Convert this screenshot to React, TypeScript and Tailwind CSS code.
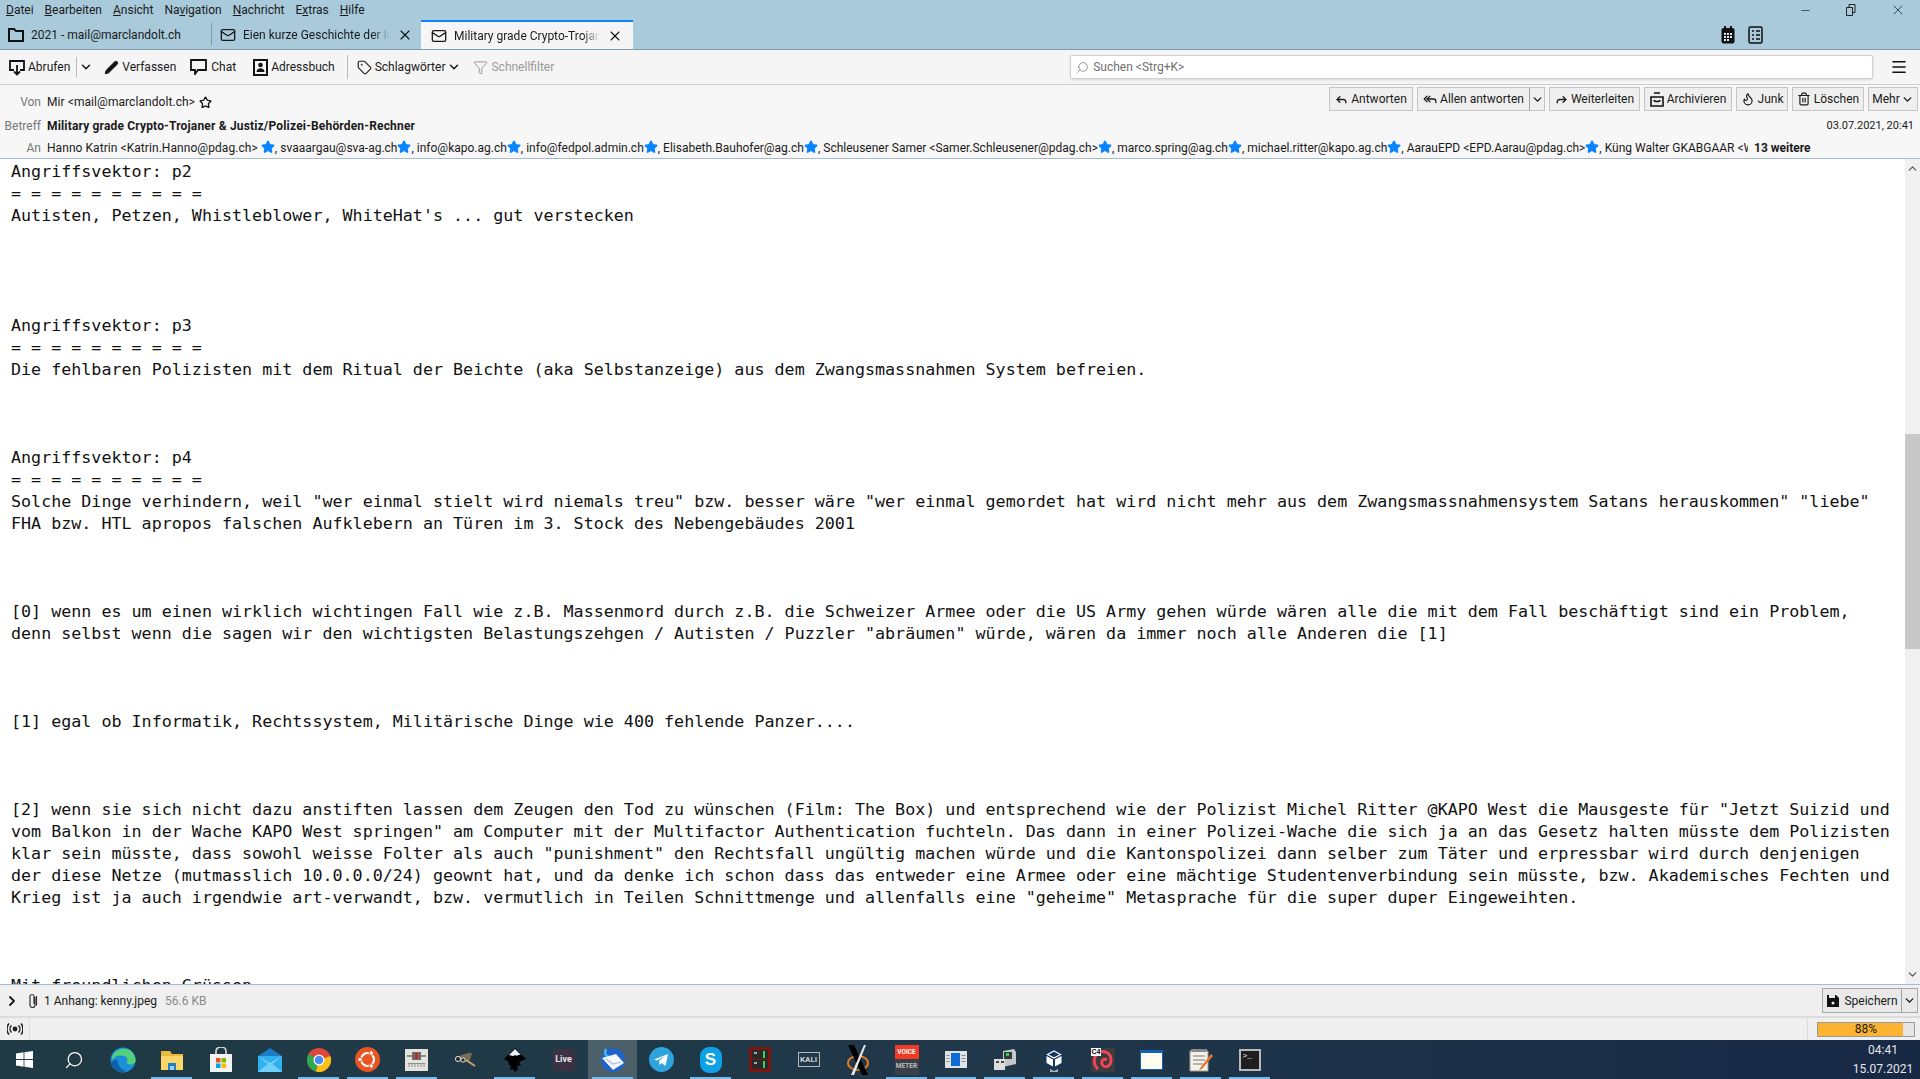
import { ChevronDown, ChevronRight, ChevronUp, Filter, Menu, Pencil, Reply, ReplyAll, Forward, Search, Star, Tag, Trash2, Flame, X, Mail, Minus } from 'lucide-react';
import type { ReactNode } from 'react';

const body = `Angriffsvektor: p2
= = = = = = = = = =
Autisten, Petzen, Whistleblower, WhiteHat's ... gut verstecken




Angriffsvektor: p3
= = = = = = = = = =
Die fehlbaren Polizisten mit dem Ritual der Beichte (aka Selbstanzeige) aus dem Zwangsmassnahmen System befreien.



Angriffsvektor: p4
= = = = = = = = = =
Solche Dinge verhindern, weil "wer einmal stielt wird niemals treu" bzw. besser wäre "wer einmal gemordet hat wird nicht mehr aus dem Zwangsmassnahmensystem Satans herauskommen" "liebe"
FHA bzw. HTL apropos falschen Aufklebern an Türen im 3. Stock des Nebengebäudes 2001



[0] wenn es um einen wirklich wichtingen Fall wie z.B. Massenmord durch z.B. die Schweizer Armee oder die US Army gehen würde wären alle die mit dem Fall beschäftigt sind ein Problem,
denn selbst wenn die sagen wir den wichtigsten Belastungszehgen / Autisten / Puzzler "abräumen" würde, wären da immer noch alle Anderen die [1]



[1] egal ob Informatik, Rechtssystem, Militärische Dinge wie 400 fehlende Panzer....



[2] wenn sie sich nicht dazu anstiften lassen dem Zeugen den Tod zu wünschen (Film: The Box) und entsprechend wie der Polizist Michel Ritter @KAPO West die Mausgeste für "Jetzt Suizid und
vom Balkon in der Wache KAPO West springen" am Computer mit der Multifactor Authentication fuchteln. Das dann in einer Polizei-Wache die sich ja an das Gesetz halten müsste dem Polizisten
klar sein müsste, dass sowohl weisse Folter als auch "punishment" den Rechtsfall ungültig machen würde und die Kantonspolizei dann selber zum Täter und erpressbar wird durch denjenigen
der diese Netze (mutmasslich 10.0.0.0/24) geownt hat, und da denke ich schon dass das entweder eine Armee oder eine mächtige Studentenverbindung sein müsste, bzw. Akademisches Fechten und
Krieg ist ja auch irgendwie art-verwandt, bzw. vermutlich in Teilen Schnittmenge und allenfalls eine "geheime" Metasprache für die super duper Eingeweihten.



Mit freundlichen Grüssen`;

const recipients = [
  'svaaargau@sva-ag.ch',
  'info@kapo.ag.ch',
  'info@fedpol.admin.ch',
  'Elisabeth.Bauhofer@ag.ch',
  'Schleusener Samer <Samer.Schleusener@pdag.ch>',
  'marco.spring@ag.ch',
  'michael.ritter@kapo.ag.ch',
  'AarauEPD <EPD.Aarau@pdag.ch>',
];

function BlueStar() {
  return <Star size={14} className="inline-block shrink-0 text-[#0a84ff] fill-[#0a84ff] align-[-2px]" />;
}

function Tab({ children, active, close, width }: { children: ReactNode; active?: boolean; close?: boolean; width: string }) {
  return (
    <div className={`${width} h-[29px] flex items-center gap-[7px] text-[12px] ${active ? 'bg-[#f5f5f5] border-t-2 border-[#0a84ff] pl-[10px] pr-[10px]' : 'pl-2 pr-2'}`}>
      {children}
      {close && <X size={16} strokeWidth={1.6} className="ml-auto shrink-0 text-[#111]" />}
    </div>
  );
}

function ToolItem({ icon, label, dim }: { icon: ReactNode; label: string; dim?: boolean }) {
  return (
    <div className={`flex items-center gap-[3px] ${dim ? 'text-[#9a9a9a]' : 'text-[#1a1a1a]'}`}>
      {icon}
      <span>{label}</span>
    </div>
  );
}

function ActionBtn({ w, icon, label, split }: { w: string; icon: ReactNode; label: string; split?: boolean }) {
  return (
    <div className={`${w} h-6 flex items-center border border-[#c4c4c4] bg-[#efefef] text-[12px] text-[#1a1a1a]`}>
      <div className="flex-1 flex items-center justify-center gap-[3px] min-w-0">
        {icon}
        <span>{label}</span>
      </div>
      {split && (
        <div className="w-[15px] h-full border-l border-[#a0a0a0] flex items-center justify-center">
          <ChevronDown size={13} strokeWidth={2.6} />
        </div>
      )}
    </div>
  );
}

function TaskCell({ children, active, running }: { children: ReactNode; active?: boolean; running?: boolean }) {
  return (
    <div className={`relative w-[49px] h-full shrink-0 flex items-center justify-center ${active ? 'bg-[#4b6069]' : ''}`}>
      {children}
      {running && <span className="absolute bottom-0 left-1 right-1 h-[2px] bg-[#76b9ed]" />}
    </div>
  );
}

function WinLogo() {
  return (
    <svg width="17" height="17" viewBox="0 0 17 17" fill="#fff">
      <path d="M0 2.4 7.6 1.3V8H0zM8.4 1.2 17 0v8H8.4zM0 9h7.6v6.7L0 14.6zM8.4 9H17v8l-8.6-1.2z" />
    </svg>
  );
}

function Edge() {
  return (
    <svg width="26" height="26" viewBox="0 0 26 26">
      <circle cx="13" cy="13" r="12.5" fill="#1b8fd8" />
      <path d="M2 10C5 2 16-1 22 5c3 3 4 7 3.500 10-2 3-7 3-9 1 2-3 1-7-4-7.500C7 8 4 10 2 13z" fill="#52d17c" />
      <path d="M8 13c-1 5 3 10 8 11-6 3-13-1-15-8 1-2 4-4 7-3z" fill="#0d5fa8" />
    </svg>
  );
}

function Explorer() {
  return (
    <svg width="24" height="24" viewBox="0 0 24 24">
      <path d="M1 3h9l2 3h11v16H1z" fill="#e8b93a" />
      <path d="M1 8h22v14H1z" fill="#fcd669" />
      <path d="M8 15h8v7H8z" fill="#1f7fc9" />
      <path d="M10 18h4v4h-4z" fill="#9ad0f2" />
    </svg>
  );
}

function Store() {
  return (
    <svg width="24" height="26" viewBox="0 0 24 26">
      <path d="M7 7V4a5 4 0 0 1 10 0v3" fill="none" stroke="#ddd" strokeWidth="1.6" />
      <path d="M1 7h22v18H1z" fill="#f3f3f3" />
      <path d="M7 11h4.500v4.500H7z" fill="#f25022" />
      <path d="M12.500 11H17v4.500h-4.500z" fill="#7fba00" />
      <path d="M7 16.500h4.500V21H7z" fill="#00a4ef" />
      <path d="M12.500 16.500H17V21h-4.500z" fill="#ffb900" />
    </svg>
  );
}

function MailApp() {
  return (
    <svg width="26" height="24" viewBox="0 0 26 24">
      <path d="M1 8 13 0l12 8v16H1z" fill="#1b7cc8" />
      <path d="M1 8h24v16H1z" fill="#31b0f0" />
      <path d="M1 8l12 9 12-9-12 8z" fill="#fff" />
      <path d="M1 24 13 14l12 10z" fill="#6fd0fa" />
    </svg>
  );
}

function Chrome() {
  return (
    <svg width="24" height="24" viewBox="0 0 24 24">
      <circle cx="12" cy="12" r="12" fill="#e0463a" />
      <path d="M12 12 1.600 6A12 12 0 0 0 9 23.600z" fill="#2da94f" />
      <path d="M12 12 23.300 8A12 12 0 0 1 9 23.600z" fill="#fbc116" />
      <circle cx="12" cy="12" r="5.500" fill="#fff" />
      <circle cx="12" cy="12" r="4.300" fill="#4a8bf4" />
    </svg>
  );
}

function Ubuntu() {
  return (
    <svg width="25" height="25" viewBox="0 0 25 25">
      <circle cx="12.500" cy="12.500" r="12.500" fill="#e95420" />
      <circle cx="12.500" cy="12.500" r="6.500" fill="none" stroke="#fff" strokeWidth="2.200" />
      <circle cx="5" cy="12.500" r="2.200" fill="#fff" stroke="#e95420" />
      <circle cx="16.300" cy="6" r="2.200" fill="#fff" stroke="#e95420" />
      <circle cx="16.300" cy="19" r="2.200" fill="#fff" stroke="#e95420" />
    </svg>
  );
}

function Chip() {
  return (
    <svg width="23" height="22" viewBox="0 0 23 22">
      <path d="M0 0h23v22H0z" fill="#e4e2dc" />
      <path d="M7 3h9v8H7z" fill="#6b6b6b" />
      <path d="M10 4h3v6h-3z" fill="#c62828" />
      <path d="M2 6h5v2H2zM16 6h5v2h-5z" fill="#8f8f8f" />
      <path d="M3 14h17v1H3z" fill="#8f8f8f" />
      <path d="M4 15v3M7 15v3M10 15v3M13 15v3M16 15v3M19 15v3" stroke="#8f8f8f" />
    </svg>
  );
}

function Gimp() {
  return (
    <svg width="24" height="16" viewBox="0 0 24 16">
      <path d="M3 6c3-3 9-5 15-5l-2 7c-4 3-10 2-13-2z" fill="#7a6c58" />
      <circle cx="4" cy="7" r="2.600" fill="#2b2b2b" stroke="#ddd" />
      <circle cx="9" cy="8" r="2.200" fill="#2b2b2b" stroke="#ddd" />
      <path d="M12 8l9 6" stroke="#c8a468" strokeWidth="2" />
    </svg>
  );
}

function Inkscape() {
  return (
    <svg width="22" height="24" viewBox="0 0 22 24">
      <path d="M11 0 22 11l-7 3 2 3-4 1 1 3-3 3-2-3-3 1 1-4-3-2 1-2-5-3z" fill="#000" />
      <path d="M11 1 17 7c-3-1-4 2-6 0-2 2-4 0-6 0z" fill="#eef2f6" />
    </svg>
  );
}

function Thunderbird() {
  return (
    <svg width="24" height="24" viewBox="0 0 24 24">
      <circle cx="12" cy="12" r="12" fill="#1f63c9" />
      <path d="M5 1C3 6 5 9 9 9" fill="none" stroke="#46b5ef" strokeWidth="2.500" />
      <path d="M1 10l14-4 8 9-11 7z" fill="#f4f7fb" />
      <path d="M5 11l7 5 8-2" fill="none" stroke="#a9bfdc" strokeWidth="1.200" />
    </svg>
  );
}

function Telegram() {
  return (
    <svg width="25" height="25" viewBox="0 0 25 25">
      <circle cx="12.500" cy="12.500" r="12.500" fill="#2fa3dd" />
      <path d="M5 12.500 19 7l-2.500 12-4-3-2 2-.5-4 6-5-8 4.500z" fill="#fff" />
    </svg>
  );
}

function Skype() {
  return (
    <div className="w-[22px] h-[26px] rounded-[9px] bg-[#0fa1e6] flex items-center justify-center text-white text-[17px] font-bold font-['Liberation_Sans',sans-serif]">S</div>
  );
}

function RackApp() {
  return (
    <svg width="22" height="27" viewBox="0 0 22 27">
      <path d="M0 1h22v25H0z" fill="#7d1610" />
      <path d="M3 4h16v9H3zM3 14h16v9H3z" fill="#2a2a2a" />
      <path d="M5 6h3v2H5zM5 16h3v2H5z" fill="#aaa" />
      <path d="M14 5h2v7h-2zM14 15h2v7h-2z" fill="#39d353" />
    </svg>
  );
}

function XApp() {
  return (
    <svg width="24" height="30" viewBox="0 0 24 30">
      <ellipse cx="12" cy="18" rx="10" ry="7" fill="none" stroke="#e07a1f" strokeWidth="2" />
      <path d="M2 0h6l14 30h-6z" fill="#000" />
      <path d="M20 0 8 30H5L18 0z" fill="#e8e8e8" />
    </svg>
  );
}

function BlueDoc() {
  return (
    <svg width="22" height="17" viewBox="0 0 22 17">
      <path d="M0 0h22v17H0z" fill="#dfe3e6" />
      <path d="M6 2h9v13H6z" fill="#0f6cd6" />
      <path d="M1.500 4h3v1h-3zM1.500 7h3v1h-3zM1.500 10h3v1h-3zM16.500 4h4v1h-4zM16.500 7h4v1h-4zM16.500 10h4v1h-4z" fill="#8a8a8a" />
    </svg>
  );
}

function Server() {
  return (
    <svg width="22" height="21" viewBox="0 0 22 21">
      <path d="M9 2l11-2 2 3v12l-13 3z" fill="#c4c6c8" />
      <path d="M10 3h8v7h-8z" fill="#2f3b35" />
      <path d="M12 4h3v3h-3z" fill="#35c25c" />
      <path d="M0 10h11v11H0z" fill="#dedede" />
      <path d="M2 12h3v2H2zM7 12h3v2H7z" fill="#4a4a4a" />
    </svg>
  );
}

function VBox() {
  return (
    <svg width="20" height="24" viewBox="0 0 20 24">
      <path d="M10 0 20 5v10l-10 6L0 15V5z" fill="#16365f" />
      <path d="M10 3 16.500 6.500 10 10 3.500 6.500z" fill="#16365f" stroke="#fff" strokeWidth="1.200" />
      <path d="M2.500 8l6.500 3.500v7L2.500 15z" fill="#fff" />
      <path d="M17.500 8 11 11.500v7l6.500-3.500z" fill="#fff" />
      <path d="M6 21l4 2 4-2v3H6z" fill="#9fb2c8" />
    </svg>
  );
}

function Debian() {
  return (
    <div className="relative w-6 h-[24px] bg-[#3b3b40] flex items-center justify-center">
      <svg width="22" height="22" viewBox="0 0 22 22">
        <path d="M6 20C1 16 1 8 6 4c5-3 13-1 13 7s-8 8-9 4 2-6 5-4" fill="none" stroke="#ef4557" strokeWidth="3" />
      </svg>
      <span className="absolute top-0 left-0 bg-white text-black text-[7px] leading-[8px] px-[1px] font-bold font-['Liberation_Sans',sans-serif]">C4</span>
    </div>
  );
}

function BlankWindow() {
  return (
    <svg width="23" height="20" viewBox="0 0 23 20">
      <path d="M0 0h23v20H0z" fill="#0f62b8" />
      <path d="M1 3h21v16H1z" fill="#fffdf0" />
    </svg>
  );
}

function Notepad() {
  return (
    <svg width="24" height="24" viewBox="0 0 24 24">
      <path d="M1 3h18v20H1z" fill="#f4f1e6" stroke="#9a9a9a" />
      <path d="M4 8h12M4 12h12M4 16h10" stroke="#777" />
      <path d="M2 1h16v3H2z" fill="#8a8a8a" />
      <path d="M22 6 12 19l-2 3 3-1L24 8z" fill="#e8742c" />
    </svg>
  );
}

function TerminalApp() {
  return (
    <div className="w-[22px] h-[22px] bg-[#1e1e1e] border-2 border-[#b9b9b9] text-white text-[8px] leading-[10px] font-['Liberation_Mono',monospace] pl-[2px]">&gt;_</div>
  );
}

export default function App() {
  return (
    <div className="w-[1920px] h-[1079px] flex flex-col overflow-hidden bg-white text-[12px] text-[#1a1a1a] font-['Roboto',sans-serif]">
      {/* Title bar with menu + tabs */}
      <div className="h-[50px] shrink-0 bg-[#a8cadb] border-b border-[#7d9cab] flex flex-col">
        <div className="h-5 flex items-center">
          <div className="flex items-center pl-[6px] gap-[11px] text-[12px]">
            <span><u>D</u>atei</span>
            <span><u>B</u>earbeiten</span>
            <span><u>A</u>nsicht</span>
            <span>Na<u>v</u>igation</span>
            <span><u>N</u>achricht</span>
            <span>E<u>x</u>tras</span>
            <span><u>H</u>ilfe</span>
          </div>
          <div className="ml-auto flex items-center h-full pr-[14px] gap-[33px]">
            <Minus size={13} strokeWidth={1.2} />
            <svg width="12" height="12" viewBox="0 0 12 12" fill="none" stroke="#222"><path d="M1.500 3.500h6v8h-6zM4 3.500V.5h6v8H7.500" /></svg>
            <X size={16} strokeWidth={1.1} />
          </div>
        </div>
        <div className="h-[29px] flex items-end">
          <Tab width="w-[211px]">
            <svg width="16" height="14" viewBox="0 0 16 14" fill="none" stroke="#111" strokeWidth="2"><path d="M1 1h5l2 2h7v10H1z" /></svg>
            <span>2021 - mail@marclandolt.ch</span>
          </Tab>
          <div className="w-px h-[22px] mb-1 bg-[#7d9cab]" />
          <Tab width="w-[209px]" close>
            <Mail size={16} strokeWidth={2} className="shrink-0" />
            <span className="w-[150px] whitespace-nowrap overflow-hidden [mask-image:linear-gradient(to_right,black_88%,transparent)]">Eien kurze Geschichte der Informatik</span>
          </Tab>
          <Tab width="w-[212px]" active close>
            <Mail size={16} strokeWidth={2} className="shrink-0" />
            <span className="w-[147px] whitespace-nowrap overflow-hidden [mask-image:linear-gradient(to_right,black_88%,transparent)]">Military grade Crypto-Trojaner</span>
          </Tab>
          <div className="ml-auto flex items-center gap-[13px] pr-[157px] pb-[5px]">
            <svg width="14" height="18" viewBox="0 0 14 18">
              <path d="M3 0h2v3H3zM9 0h2v3H9z" fill="#111" />
              <rect x="0.500" y="2" width="13" height="15.500" rx="2" fill="#111" />
              <path d="M3 7h2v2H3zM6 7h2v2H6zM9 7h2v2H9zM3 10h2v2H3zM6 10h2v2H6zM9 10h2v2H9zM3 13h2v2H3zM6 13h2v2H6z" fill="#dfe8ee" />
            </svg>
            <svg width="15" height="18" viewBox="0 0 15 18" fill="none" stroke="#111" strokeWidth="1.500">
              <rect x="1" y="1" width="13" height="16" rx="1.500" /><path d="M4 5h2M8 5h4M4 9h2M8 9h4M4 13h2M8 13h4" />
            </svg>
          </div>
        </div>
      </div>

      {/* Main toolbar */}
      <div className="h-[35px] shrink-0 bg-[#f5f5f5] border-b border-[#cccccc] flex items-center pl-[9px] pr-3 text-[12px]">
        <ToolItem label="Abrufen" icon={
          <svg width="16" height="17" viewBox="0 0 16 17" fill="none" stroke="#111" strokeWidth="1.800"><path d="M5 11H1V2h14v9h-4" /><path d="M8 6v10M5 12.500l3 3 3-3" /></svg>
        } />
        <div className="w-px h-5 bg-[#bbb] ml-[6px] mr-[2px]" />
        <ChevronDown size={14} strokeWidth={2.6} />
        <div className="w-[11px]" />
        <ToolItem label="Verfassen" icon={<Pencil size={15} fill="#111" strokeWidth={1.5} />} />
        <div className="w-[14px]" />
        <ToolItem label="Chat" icon={
          <svg width="18" height="16" viewBox="0 0 18 16" fill="none" stroke="#111" strokeWidth="1.800"><path d="M1 1h15v10H8l-3 4v-4H1z" /></svg>
        } />
        <div className="w-[16px]" />
        <ToolItem label="Adressbuch" icon={
          <svg width="16" height="17" viewBox="0 0 16 17"><path d="M1 0h15v17H1z" fill="#111" /><path d="M3 2h11v13H3z" fill="#f5f5f5" /><circle cx="8.500" cy="6" r="2.300" fill="#111" /><path d="M4.500 13c0-5 8-5 8 0z" fill="#111" /></svg>
        } />
        <div className="w-px h-6 bg-[#bbb] ml-3 mr-[9px]" />
        <ToolItem label="Schlagwörter" icon={<Tag size={15} strokeWidth={1.8} />} />
        <ChevronDown size={14} strokeWidth={2.6} className="ml-[2px]" />
        <div className="w-[12px]" />
        <ToolItem dim label="Schnellfilter" icon={<Filter size={15} strokeWidth={1.6} className="text-[#9a9a9a]" />} />
        <div className="ml-[516px] w-[803px] h-6 bg-white border border-[#d0d0d0] rounded-[2px] shadow-sm flex items-center pl-[5px] gap-[4px] text-[#707070]">
          <Search size={13} strokeWidth={1.3} className="-scale-x-100" />
          <span>Suchen &lt;Strg+K&gt;</span>
        </div>
        <Menu size={18} strokeWidth={2.2} className="ml-auto text-[#111]" />
      </div>

      {/* Message header */}
      <div className="h-[74px] shrink-0 bg-[#f7f7f7] border-b border-[#a9bacb] flex flex-col text-[12px]">
        <div className="h-[30px] flex items-center pr-[2px]">
          <span className="w-[41px] pt-1 text-right text-[#777]">Von</span>
          <span className="ml-[6px] pt-1 tracking-[0.07px]">Mir &lt;mail@marclandolt.ch&gt;</span>
          <Star size={13} strokeWidth={2.4} className="ml-[4px] mt-1 text-[#111]" />
          <div className="ml-auto flex items-center gap-[4px] pb-[2px]">
            <ActionBtn w="w-[84px]" label="Antworten" icon={<Reply size={13} strokeWidth={2.4} />} />
            <ActionBtn w="w-[128px]" split label="Allen antworten" icon={<ReplyAll size={14} strokeWidth={2.2} />} />
            <ActionBtn w="w-[91px]" label="Weiterleiten" icon={<Forward size={13} strokeWidth={2.4} />} />
            <ActionBtn w="w-[88px]" label="Archivieren" icon={
              <svg width="14" height="15" viewBox="0 0 14 15" fill="none" stroke="#111" strokeWidth="1.600"><path d="M4 1h6M1 5h12v9H1z" /><path d="M4 8c0 2 6 2 6 0" /></svg>
            } />
            <ActionBtn w="w-[52px]" label="Junk" icon={<Flame size={14} strokeWidth={2} />} />
            <ActionBtn w="w-[72px]" label="Löschen" icon={<Trash2 size={14} strokeWidth={2} />} />
            <div className="w-[50px] h-6 flex items-center justify-center gap-[1px] border border-[#c4c4c4] bg-[#efefef]">
              <span>Mehr</span>
              <ChevronDown size={13} strokeWidth={2.6} />
            </div>
          </div>
        </div>
        <div className="h-[22px] flex items-center pr-[6px]">
          <span className="w-[41px] text-right text-[#777]">Betreff</span>
          <span className="ml-[6px] font-bold tracking-[0.17px]">Military grade Crypto-Trojaner &amp; Justiz/Polizei-Behörden-Rechner</span>
          <span className="ml-auto text-[11px]">03.07.2021, 20:41</span>
        </div>
        <div className="h-[21px] flex items-center">
          <span className="w-[41px] shrink-0 text-right text-[#777]">An</span>
          <div className="ml-[6px] w-[1701px] shrink-0 whitespace-nowrap overflow-hidden">
            <span className="tracking-[0.06px]">Hanno Katrin &lt;Katrin.Hanno@pdag.ch&gt; <BlueStar />, </span>
            {recipients.map((r) => (
              <span key={r}>{r}<BlueStar />, </span>
            ))}
            <span>Küng Walter GKABGAAR &lt;W</span>
          </div>
          <span className="ml-[6px] font-bold">13 weitere</span>
        </div>
      </div>

      {/* Message body */}
      <div className="flex-1 min-h-0 flex bg-white">
        <pre className="flex-1 min-w-0 overflow-hidden pl-[11px] pt-px text-[16.7px] leading-[22px] text-[#111] font-['DejaVu_Sans_Mono',monospace]">{body}</pre>
        <div className="w-[15px] shrink-0 bg-[#f0f0f0] flex flex-col items-center">
          <ChevronUp size={13} strokeWidth={2} className="mt-[3px] text-[#505050]" />
          <div className="w-full h-[215px] bg-[#c8c8c8] mt-[259px]" />
          <ChevronDown size={13} strokeWidth={2} className="mt-auto mb-[3px] text-[#505050]" />
        </div>
      </div>

      {/* Attachment bar */}
      <div className="h-[34px] shrink-0 bg-[#efefef] border-t border-[#a9bacb] border-b-2 border-b-[#dcdcdc] flex items-center pl-[4px] pr-[2px]">
        <ChevronRight size={16} strokeWidth={2.8} />
        <svg width="10" height="16" viewBox="0 0 10 16" fill="none" stroke="#333" strokeWidth="1.200" className="ml-[8px]">
          <path d="M7 4v8a2.500 2.500 0 0 1-5 0V3.500a2 2 0 0 1 4 0V11" /><path d="M8.500 3v9.500" />
        </svg>
        <span className="ml-[6px] pt-px">1 Anhang: kenny.jpeg</span>
        <span className="ml-2 pt-px text-[#8a8a8a]">56.6 KB</span>
        <div className="ml-auto w-[96px] h-[25px] flex items-center border border-[#a8a8a8] bg-[#e9e9e9]">
          <div className="flex-1 flex items-center justify-center gap-1">
            <svg width="14" height="14" viewBox="0 0 14 14"><path d="M1 1h9l3 3v9H1z" fill="#111" /><path d="M3 1h6v3H3z" fill="#e9e9e9" /><circle cx="7" cy="9" r="1.500" fill="#e9e9e9" /></svg>
            <span>Speichern</span>
          </div>
          <div className="w-4 h-full border-l border-[#a0a0a0] flex items-center justify-center">
            <ChevronDown size={13} strokeWidth={2.6} />
          </div>
        </div>
      </div>

      {/* Status bar */}
      <div className="h-[22px] shrink-0 bg-[#efefef] flex items-center">
        <div className="w-[30px] h-full border-r border-[#dcdcdc] flex items-center justify-center">
          <svg width="16" height="12" viewBox="0 0 16 12" fill="none" stroke="#222" strokeWidth="1.500">
            <circle cx="8" cy="6" r="1.700" fill="#222" />
            <path d="M4.500 2.500a5 5 0 0 0 0 7M11.500 2.500a5 5 0 0 1 0 7M2 .5a8.500 8.500 0 0 0 0 11M14 .5a8.500 8.500 0 0 1 0 11" />
          </svg>
        </div>
        <div className="ml-auto h-full w-[113px] border-l border-[#dcdcdc] flex items-center pl-[9px]">
          <div className="relative w-[98px] h-[15px] border border-[#9a9a9a] bg-[#e6e6e6] flex items-center justify-center">
            <div className="absolute left-0 top-0 bottom-0 w-[85px] bg-[#fbb331]" />
            <span className="relative text-[12px] leading-none">88%</span>
          </div>
        </div>
      </div>

      {/* Taskbar */}
      <div className="h-[39px] shrink-0 bg-gradient-to-r from-[#1f3a44] via-[#20384a] to-[#172845] flex items-center text-white">
        <TaskCell><WinLogo /></TaskCell>
        <TaskCell><Search size={20} strokeWidth={1.5} className="-scale-x-100" /></TaskCell>
        <TaskCell><Edge /></TaskCell>
        <TaskCell running><Explorer /></TaskCell>
        <TaskCell><Store /></TaskCell>
        <TaskCell><MailApp /></TaskCell>
        <TaskCell running><Chrome /></TaskCell>
        <TaskCell running><Ubuntu /></TaskCell>
        <TaskCell running><Chip /></TaskCell>
        <TaskCell><Gimp /></TaskCell>
        <TaskCell running><Inkscape /></TaskCell>
        <TaskCell>
          <div className="w-[22px] h-[22px] bg-[#3d3245] flex items-center justify-center text-[9px] font-bold text-[#e8e8e8]">Live</div>
        </TaskCell>
        <TaskCell active running><Thunderbird /></TaskCell>
        <TaskCell><Telegram /></TaskCell>
        <TaskCell running><Skype /></TaskCell>
        <TaskCell><RackApp /></TaskCell>
        <TaskCell>
          <div className="w-[22px] h-[15px] border border-[#b8b8b8] flex items-center justify-center text-[8px] font-bold text-[#cfcfcf]">KALI</div>
        </TaskCell>
        <TaskCell><XApp /></TaskCell>
        <TaskCell running>
          <div className="w-6 h-[30px] bg-[#3a4048] flex flex-col items-center text-[6.5px] font-bold leading-[14px]">
            <div className="w-full bg-[#f03a24] text-center">VOICE</div>
            <div className="text-[#bdbdbd]">METER</div>
          </div>
        </TaskCell>
        <TaskCell running><BlueDoc /></TaskCell>
        <TaskCell running><Server /></TaskCell>
        <TaskCell running><VBox /></TaskCell>
        <TaskCell running><Debian /></TaskCell>
        <TaskCell running><BlankWindow /></TaskCell>
        <TaskCell running><Notepad /></TaskCell>
        <TaskCell running><TerminalApp /></TaskCell>
        <div className="ml-auto w-[66px] mr-[4px] flex flex-col items-center text-[12px] leading-[19px] text-[#e8e8e8]">
          <span>04:41</span>
          <span>15.07.2021</span>
        </div>
      </div>
    </div>
  );
}
